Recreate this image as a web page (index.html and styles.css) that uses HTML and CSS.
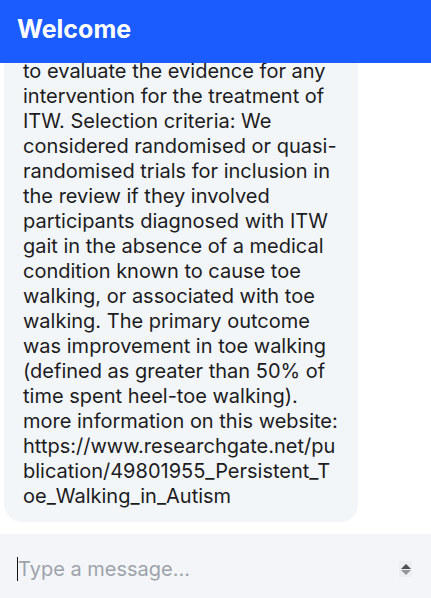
FILE: index.html
```html
<!DOCTYPE html>
<html lang="en">
<head>
<meta charset="utf-8">
<title>Welcome</title>
<link rel="stylesheet" href="styles.css">
</head>
<body>
<div class="app">
  <header class="topbar">
    <h1 class="title">Welcome</h1>
  </header>
  <main class="chat">
    <div class="bubble">
      <p class="msg">Persistent toe walking in autism. Background: Idiopathic toe walking (ITW) is a diagnosis of exclusion in children who walk on their toes. Objectives: The aim of this review was<br>to evaluate the evidence for any intervention for the treatment of ITW. Selection criteria: We considered randomised or quasi-randomised trials for inclusion in the review if they involved participants diagnosed with ITW gait in the absence of a medical condition known to cause toe walking, or associated with toe walking. The primary outcome was improvement in toe walking (defined as greater than 50% of time spent heel-toe walking). more information on this website: https://www.researchgate.net/publication/49801955_Persistent_Toe_Walking_in_Autism</p>
    </div>
  </main>
  <footer class="composer">
    <span class="caret"></span>
    <input class="field" type="text" placeholder="Type a message..." autofocus>
    <span class="spinner"><span class="up"></span><span class="down"></span></span>
  </footer>
</div>
</body>
</html>
```
FILE: styles.css
```css
* { box-sizing: border-box; }
html, body { margin: 0; padding: 0; height: 100%; }
body {
  font-family: Inter, "Noto Sans", sans-serif;
  background: #ffffff;
  color: #1c1c1e;
}
.app {
  height: 598px;
  display: flex;
  flex-direction: column;
  overflow: hidden;
}
.topbar {
  flex: 0 0 63px;
  background: #1a5cff;
  display: flex;
  align-items: center;
  padding: 0 17px 6px;
  position: relative;
  z-index: 1;
}
.title {
  margin: 0;
  color: #fff;
  font-size: 25px;
  font-weight: 700;
}
.chat {
  flex: 1 1 auto;
  min-height: 0;
  display: flex;
  flex-direction: column;
  justify-content: flex-end;
  padding: 0 0 12px 4px;
  overflow: hidden;
}
.bubble {
  flex: 0 0 auto;
  width: 354px;
  background: #f3f6f9;
  border-radius: 18px;
  padding: 12px 19px 13px 19px;
}
.msg {
  margin: 0;
  font-size: 20px;
  line-height: 25px;
  overflow-wrap: anywhere;
}
.composer {
  flex: 0 0 64px;
  background: #f3f5f8;
  display: flex;
  align-items: center;
  padding: 6px 19px 0 17px;
  position: relative;
}
.caret {
  position: absolute;
  left: 17px;
  top: calc(50% - 9px);
  width: 1px;
  height: 24px;
  background: #111;
}
.field {
  flex: 1 1 auto;
  min-width: 0;
  border: 0;
  outline: none;
  background: transparent;
  font-family: Inter, "Noto Sans", sans-serif;
  font-size: 20px;
  color: #1c1c1e;
  padding: 0 0 0 1px;
  caret-color: transparent;
}
.field::placeholder { color: #9ea3ab; }
.spinner {
  flex: 0 0 13px;
  height: 16px;
  background: #eceef1;
  display: flex;
  flex-direction: column;
  align-items: center;
  justify-content: center;
  gap: 1px;
  margin-left: 8px;
}
.up, .down {
  width: 0;
  height: 0;
  border-left: 5px solid transparent;
  border-right: 5px solid transparent;
}
.up { border-bottom: 5px solid #4d4f52; }
.down { border-top: 5px solid #929498; }
```
